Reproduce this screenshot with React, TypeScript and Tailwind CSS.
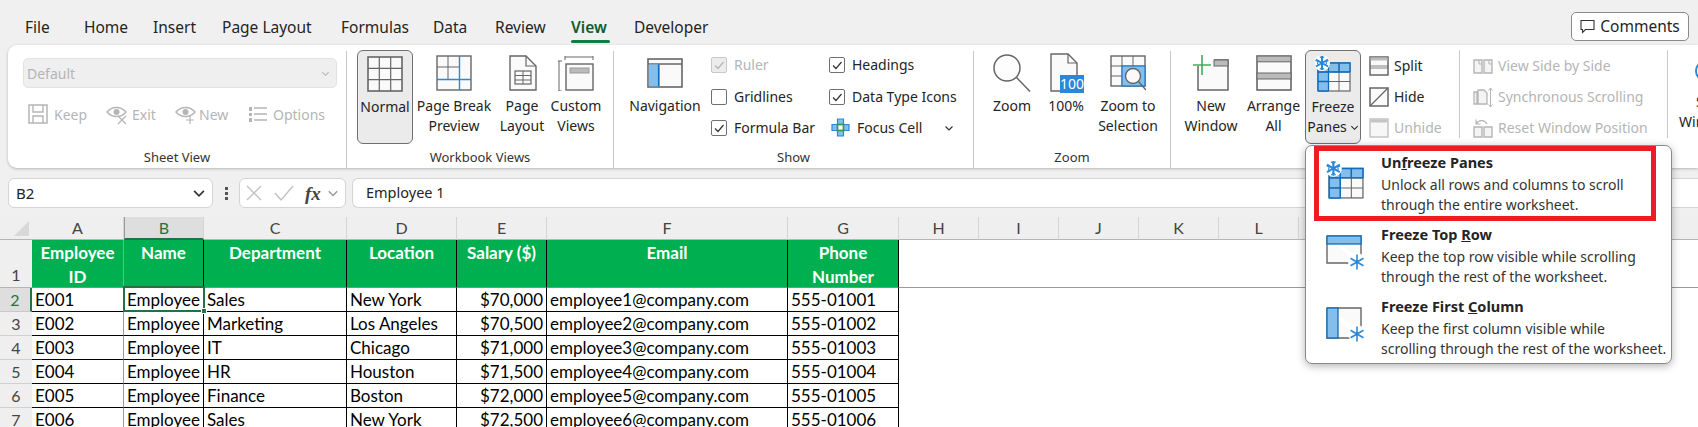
import React from "react";

const G = "#666666";
const B = "#2b88d8";
const L = "#83beec";
const D = "#c4c4c4";

function Svg({ s = 36, v = 36, children, className = "" }: { s?: number; v?: number; children: React.ReactNode; className?: string }) {
  return (
    <svg width={s} height={s} viewBox={`0 0 ${v} ${v}`} fill="none" className={"shrink-0 " + className}>
      {children}
    </svg>
  );
}

function Star({ x, y, r = 7, c = B, w = 1.6 }: { x: number; y: number; r?: number; c?: string; w?: number }) {
  const a = r * 0.87;
  const b = r * 0.5;
  return (
    <g stroke={c} strokeWidth={w}>
      <path d={`M${x} ${y - r}V${y + r}M${x - a} ${y - b}L${x + a} ${y + b}M${x - a} ${y + b}L${x + a} ${y - b}`} />
    </g>
  );
}

const NormalIcon = () => (
  <Svg>
    <rect x="1" y="1" width="34" height="34" fill="#fafafa" stroke={G} strokeWidth="1.6" />
    <path d="M12.3 1V35M23.7 1V35M1 12.3H35M1 23.7H35" stroke={G} strokeWidth="1.2" />
  </Svg>
);
const BreakIcon = () => (
  <Svg>
    <rect x="1" y="1" width="34" height="34" fill="#fafafa" stroke={G} strokeWidth="1.4" />
    <path d="M12 1V24M1 12H23" stroke={G} strokeWidth="1" />
    <path d="M23.5 1V35M1 24.5H35" stroke={B} strokeWidth="1.4" />
  </Svg>
);
const LayoutIcon = () => (
  <Svg>
    <path d="M6 1H22L32 11V35H6Z" fill="#fafafa" stroke={G} strokeWidth="1.4" />
    <path d="M22 1V11H32" stroke={G} strokeWidth="1.2" />
    <rect x="11" y="16" width="16" height="13" stroke={G} strokeWidth="1.2" />
    <path d="M11 20.5H27M11 25H27M19 16V29" stroke={G} />
  </Svg>
);
const CustomIcon = () => (
  <Svg>
    <path d="M1 5V35M0 5H4M0 35H4M7 1H35M7 0V4M35 0V4" stroke={G} strokeWidth="1" transform="translate(0 1)" />
    <rect x="8" y="9" width="27" height="26" fill="#fafafa" stroke={G} strokeWidth="1.4" />
    <rect x="12" y="13" width="19" height="5" fill="#bbbbbb" stroke="#999999" />
  </Svg>
);
const NavIcon = () => (
  <Svg>
    <rect x="1" y="4" width="34" height="28" fill="#fafafa" stroke={G} strokeWidth="1.6" />
    <path d="M1 9H35" stroke={G} strokeWidth="1.4" />
    <rect x="1.8" y="9.5" width="9" height="21.7" fill={L} />
    <rect x="10.8" y="9.5" width="1.8" height="21.7" fill="#0f6cbd" />
  </Svg>
);
const ZoomIcon = () => (
  <Svg s={40} v={40}>
    <circle cx="15" cy="15" r="13" fill="#fdfdfd" stroke={G} strokeWidth="1.5" />
    <path d="M24.5 24.5L38 38.5" stroke={G} strokeWidth="1.5" />
  </Svg>
);
const PctIcon = () => (
  <Svg s={40} v={40}>
    <path d="M5 1H22L31 10V38H5Z" fill="#fafafa" stroke={G} strokeWidth="1.4" />
    <path d="M22 1V10H31" stroke={G} strokeWidth="1.2" />
    <rect x="14" y="22" width="24" height="18" fill={B} />
    <text x="26" y="36" textAnchor="middle" fontSize="14" fill="#ffffff" fontFamily="Noto Sans, sans-serif">100</text>
  </Svg>
);
const ZoomSelIcon = () => (
  <Svg>
    <rect x="1" y="1" width="34" height="30" fill="#fafafa" stroke={G} strokeWidth="1.4" />
    <path d="M12 1V31M23 1V31M1 11H35M1 21H35" stroke={G} />
    <rect x="12" y="11" width="23" height="20" fill={L} stroke="#0f6cbd" />
    <circle cx="23" cy="21" r="7.5" fill="#fafafa" stroke={G} strokeWidth="1.4" />
    <path d="M28.5 26.5L36 35" stroke={G} strokeWidth="1.4" />
  </Svg>
);
const NewWinIcon = () => (
  <Svg>
    <path d="M5 11V35H35V5H21" stroke={G} strokeWidth="1.5" fill="#fafafa" />
    <rect x="21" y="5" width="14" height="6" fill="#bbbbbb" stroke={G} />
    <path d="M9 0V20M0 10H18" stroke="#3fae5a" strokeWidth="1.6" />
  </Svg>
);
const ArrangeIcon = () => (
  <Svg>
    <rect x="1" y="1" width="34" height="34" fill="#fafafa" stroke={G} strokeWidth="1.6" />
    <rect x="1.8" y="1.8" width="32.4" height="5" fill="#bbbbbb" />
    <rect x="1" y="18" width="34" height="6" fill="#bbbbbb" stroke={G} />
    <path d="M1 6.8H35" stroke={G} />
  </Svg>
);
function FreezeIcon({ s = 36 }: { s?: number }) {
  return (
    <Svg s={s} v={36}>
      <rect x="3" y="7" width="32" height="28" fill="#fafafa" stroke={G} strokeWidth="1.2" />
      <rect x="3" y="7" width="32" height="9" fill={L} />
      <rect x="3" y="7" width="10.5" height="28" fill={L} />
      <path d="M13.5 16V35M24 7V35M3 16H35M3 25.5H35" stroke={G} />
      <path d="M3 16H35M13.5 7V35M24 7V16M3 25.5H13.5" stroke="#0f6cbd" strokeWidth="1.3" />
      <path d="M3 35V7H35V16M3 35H13.5" stroke="#0f6cbd" strokeWidth="1.4" />
      <circle cx="7" cy="7" r="8" fill="#ffffff" />
      <Star x={7} y={7} r={7} w={2} />
      <path d="M4.8 0.6L7 2.6L9.2 0.6M4.8 13.4L7 11.4L9.2 13.4M0.6 4.8L3 5.6L2.4 8.4M13.4 4.8L11 5.6L11.6 8.4" stroke={B} strokeWidth="1.1" />
    </Svg>
  );
}
const TopRowIcon = () => (
  <Svg s={40} v={40}>
    <path d="M1 3H35V26M30 30H1V3" stroke={G} strokeWidth="1.4" fill="#fafafa" />
    <rect x="1" y="3" width="34" height="8" fill={L} stroke="#0f6cbd" strokeWidth="1.3" />
    <circle cx="31" cy="29" r="9" fill="#ffffff" />
    <Star x={31} y={29} r={7.4} />
  </Svg>
);
const FirstColIcon = () => (
  <Svg s={40} v={40}>
    <path d="M1 3H35V26M30 33H1V3" stroke={G} strokeWidth="1.4" fill="#fafafa" />
    <rect x="1" y="3" width="11" height="30" fill={L} stroke="#0f6cbd" strokeWidth="1.3" />
    <circle cx="31" cy="29" r="9" fill="#ffffff" />
    <Star x={31} y={29} r={7.4} />
  </Svg>
);

const SplitIcon = () => (
  <Svg s={20} v={20}>
    <rect x="1" y="1" width="18" height="18" stroke={G} strokeWidth="1.5" fill="#fafafa" />
    <rect x="1.5" y="1.5" width="17" height="3" fill="#bbbbbb" />
    <path d="M1 10H19M1 12H19" stroke={G} strokeWidth="0.8" />
  </Svg>
);
const HideIcon = () => (
  <Svg s={20} v={20}>
    <rect x="1" y="1" width="18" height="18" stroke={G} strokeWidth="1.5" fill="#fafafa" />
    <path d="M1 19L19 1" stroke={G} strokeWidth="1.2" />
  </Svg>
);
const UnhideIcon = () => (
  <Svg s={20} v={20}>
    <rect x="1" y="1" width="18" height="18" stroke={D} strokeWidth="1.5" fill="#f7f7f7" />
    <rect x="1.5" y="1.5" width="17" height="3" fill={D} />
  </Svg>
);
const SideIcon = () => (
  <Svg s={20} v={20}>
    <path d="M1 4H9V17H1ZM11 4H19V17H11Z" stroke="#b5b5b5" strokeWidth="1.4" fill="#f4f4f4" />
    <path d="M6 4V8H9M16 4V8H19" stroke="#b5b5b5" />
  </Svg>
);
const SyncIcon = () => (
  <Svg s={20} v={20} >
    <path d="M1 5H4V17H1ZM5 3H11L14 6V17H5Z" stroke="#b5b5b5" strokeWidth="1.3" fill="#f4f4f4" />
    <path d="M17.5 1V20M15.5 3.5L17.5 1L19.5 3.5M15.5 17.5L17.5 20L19.5 17.5" stroke="#b5b5b5" />
  </Svg>
);
const ResetIcon = () => (
  <Svg s={20} v={20}>
    <path d="M1 9H9V19H1ZM11 9H19V19H11Z" stroke="#b5b5b5" strokeWidth="1.4" fill="#f4f4f4" />
    <path d="M3 6C6 1 12 2 14 6M3 1.5V6H7.5" stroke="#b5b5b5" strokeWidth="1.2" />
  </Svg>
);
const FocusIcon = () => (
  <Svg s={19} v={19}>
    <path d="M6.5 1H12.5V6.5H18V12.5H12.5V18H6.5V12.5H1V6.5H6.5Z" fill={L} stroke={B} strokeWidth="1.2" />
    <rect x="6.5" y="6.5" width="6" height="6" fill="#ffffff" stroke="#3a9a5b" strokeWidth="1.8" />
  </Svg>
);
const SaveIcon = () => (
  <Svg s={20} v={20}>
    <path d="M1 1H19V19H1Z" stroke="#b5b5b5" strokeWidth="1.5" />
    <path d="M5 1V8H15V1M5 19V12H15V19" stroke="#b5b5b5" strokeWidth="1.4" />
  </Svg>
);
function EyeIcon({ plus }: { plus?: boolean }) {
  return (
    <Svg s={22} v={22}>
      <path d="M1 9C6 3 15 3 20 9C15 15 6 15 1 9Z" stroke="#b5b5b5" strokeWidth="1.4" />
      <circle cx="10.5" cy="9" r="3" fill="#b5b5b5" />
      {plus ? (
        <path d="M15 13V21M11 17H19" stroke="#b5b5b5" strokeWidth="1.2" />
      ) : (
        <path d="M12 13L20 21M20 13L12 21" stroke="#b5b5b5" strokeWidth="1.2" />
      )}
    </Svg>
  );
}
const ListIcon = () => (
  <Svg s={20} v={20}>
    <path d="M1 3H4V7H1ZM1 9H4V12H1ZM1 14H4V18H1Z" fill="#b5b5b5" />
    <path d="M6 4H19M6 10H19M6 16H19" stroke="#b5b5b5" strokeWidth="1.5" />
  </Svg>
);
const Chevron = ({ c = "#444444", s = 10 }: { c?: string; s?: number }) => (
  <svg width={s} height={s} viewBox="0 0 10 10" fill="none" className="shrink-0">
    <path d="M1.5 3.5L5 7L8.5 3.5" stroke={c} strokeWidth="1.2" />
  </svg>
);

function Big({ w, icon, lines, active, chev }: { w: string; icon: React.ReactNode; lines: string[]; active?: boolean; chev?: boolean }) {
  return (
    <div className={w + " h-[94px] shrink-0 flex flex-col items-center rounded-[6px] pt-[4px] " + (active ? "bg-[#ebebeb] border border-[#707070] pt-[3px]" : "")}>
      <div className="h-[38px] flex items-center justify-center">{icon}</div>
      <div className="mt-[4px] text-center leading-[20px] whitespace-nowrap text-[#242424]">
        {lines.map((l, i) => (
          <div key={l} className="flex items-center justify-center gap-[3px]">
            {l}
            {chev && i === lines.length - 1 ? <Chevron c="#242424" s={9} /> : null}
          </div>
        ))}
      </div>
    </div>
  );
}

function Check({ label, on, off, w }: { label: string; on?: boolean; off?: boolean; w: string }) {
  return (
    <div className={w + " h-[31px] first:h-[29px] first:mb-[2px] flex items-center gap-[7px] " + (off ? "text-[#b5b5b5]" : "text-[#242424]")}>
      <span className={"w-[16px] h-[16px] rounded-[2px] border flex items-center justify-center shrink-0 " + (off ? "border-[#c8c8c8] bg-[#ececec]" : "border-[#707070]")}>
        {on ? (
          <svg width="12" height="12" viewBox="0 0 12 12" fill="none">
            <path d="M2 6.5L5 9.5L10.5 3" stroke={off ? "#b5b5b5" : "#333333"} strokeWidth="1.2" />
          </svg>
        ) : null}
      </span>
      {label}
    </div>
  );
}

function Small({ icon, label, off, gap = "gap-[5px]" }: { icon: React.ReactNode; label: string; off?: boolean; gap?: string }) {
  return (
    <div className={"h-[31px] flex items-center whitespace-nowrap " + gap + " " + (off ? "text-[#b5b5b5]" : "text-[#242424]")}>
      {icon}
      {label}
    </div>
  );
}

function Group({ w, label, children, last }: { w: string; label?: string; children: React.ReactNode; last?: boolean }) {
  return (
    <div className={w + " shrink-0 mt-[6px] flex flex-col " + (last ? "" : "border-r border-[#c8c8c8]")}>
      <div className="h-[94px] -mt-[1px] flex">{children}</div>
      <div className="mt-[3px] h-[20px] leading-[20px] text-center text-[13px] text-[#333333]">{label}</div>
    </div>
  );
}

const TABS: [string, string][] = [
  ["File", "w-[59px]"],
  ["Home", "w-[69px]"],
  ["Insert", "w-[69px]"],
  ["Page Layout", "w-[119px]"],
  ["Formulas", "w-[92px]"],
  ["Data", "w-[62px]"],
  ["Review", "w-[76px]"],
  ["View", "w-[63px]"],
  ["Developer", "w-[90px]"],
];

const ROWS = [
  ["E001", "Sales", "New York", "$70,000", "employee1@company.com", "555-01001"],
  ["E002", "Marketing", "Los Angeles", "$70,500", "employee2@company.com", "555-01002"],
  ["E003", "IT", "Chicago", "$71,000", "employee3@company.com", "555-01003"],
  ["E004", "HR", "Houston", "$71,500", "employee4@company.com", "555-01004"],
  ["E005", "Finance", "Boston", "$72,000", "employee5@company.com", "555-01005"],
  ["E006", "Sales", "New York", "$72,500", "employee6@company.com", "555-01006"],
];

const COLS = ["A", "B", "C", "D", "E", "F", "G", "H", "I", "J", "K", "L", "M", "N", "O", "P", "Q"];
const HEAD = [["Employee", "ID"], ["Name"], ["Department"], ["Location"], ["Salary ($)"], ["Email"], ["Phone", "Number"]];

function MenuItem({ icon, title, desc }: { icon: React.ReactNode; title: React.ReactNode; desc: string[] }) {
  return (
    <div className="h-[72px] flex pt-[4px] pb-[4px]">
      <div className="w-[75px] shrink-0 pl-[20px] pt-[10px]">{icon}</div>
      <div>
        <div className="font-bold leading-[22px] mb-[2px] text-[14.5px] text-[#242424]">{title}</div>
        {desc.map((d) => (
          <div key={d} className="leading-[20px] text-[14px] text-[#333333] whitespace-nowrap">{d}</div>
        ))}
      </div>
    </div>
  );
}

export default function App() {
  const ui = "font-['Noto_Sans',sans-serif]";
  return (
    <div className={"relative w-[1698px] h-[427px] overflow-hidden bg-[#f0f0f0] text-[14px] " + ui}>
      {/* Tabs */}
      <div className="h-[45px] flex pl-[25px] text-[15.5px] text-[#242424]">
        {TABS.map(([t, w]) => (
          <div key={t} className={w + " shrink-0 pt-[15px] leading-[24px] " + (t === "View" ? "font-semibold text-[#0e5c2f]" : "")}>
            {t}
            {t === "View" ? <div className="mt-[1px] w-[39px] h-[3px] rounded-full bg-[#107c41]" /> : null}
          </div>
        ))}
        <div className="ml-auto mr-[9px] mt-[12px] h-[29px] w-[118px] border border-[#8a8a8a] rounded-[5px] bg-white flex items-center justify-center gap-[5px] text-[15.5px]">
          <svg width="15" height="15" viewBox="0 0 15 15" fill="none">
            <path d="M1 1.5H14V10.5H5.5L2.5 13.5V10.5H1Z" stroke="#333333" strokeWidth="1.1" />
          </svg>
          Comments
        </div>
      </div>

      {/* Ribbon */}
      <div className="ml-[8px] h-[123px] flex bg-white rounded-l-[9px] shadow-[0_1px_3px_rgba(0,0,0,0.25)] overflow-hidden">
        <Group w="w-[339px]" label="Sheet View">
          <div className="pl-[15px] pt-[8px]">
            <div className="w-[314px] h-[30px] rounded-[5px] bg-[#efefef] border border-[#e2e2e2] flex items-center justify-between px-[3px] pr-[6px] text-[#b5b5b5]">
              Default
              <Chevron c="#b5b5b5" s={9} />
            </div>
            <div className="flex mt-[10px] text-[#b5b5b5] items-center h-[32px]">
              <div className="ml-[5px] w-[78px]"><Small icon={<SaveIcon />} label="Keep" off gap="gap-[6px]" /></div>
              <div className="w-[69px]"><Small icon={<EyeIcon />} label="Exit" off gap="gap-[4px]" /></div>
              <div className="w-[73px]"><Small icon={<EyeIcon plus />} label="New" off gap="gap-[2px]" /></div>
              <Small icon={<ListIcon />} label="Options" off gap="gap-[5px]" />
            </div>
          </div>
        </Group>
        <Group w="w-[267px]" label="Workbook Views">
          <div className="w-[10px] shrink-0" />
          <Big w="w-[56px]" icon={<NormalIcon />} lines={["Normal"]} active />
          <Big w="w-[82px]" icon={<BreakIcon />} lines={["Page Break", "Preview"]} />
          <Big w="w-[54px]" icon={<LayoutIcon />} lines={["Page", "Layout"]} />
          <Big w="w-[54px]" icon={<CustomIcon />} lines={["Custom", "Views"]} />
        </Group>
        <Group w="w-[360px]" label="Show">
          <div className="w-[11px] shrink-0" />
          <Big w="w-[80px]" icon={<NavIcon />} lines={["Navigation"]} />
          <div className="w-[6px] shrink-0" />
          <div className="w-[118px] shrink-0">
            <Check label="Ruler" on off w="w-full" />
            <Check label="Gridlines" w="w-full" />
            <Check label="Formula Bar" on w="w-full" />
          </div>
          <div className="shrink-0">
            <Check label="Headings" on w="w-full" />
            <Check label="Data Type Icons" on w="w-full" />
            <div className="h-[31px] flex items-center text-[#242424] pl-[2px] gap-[7px]">
              <FocusIcon />
              Focus Cell
              <span className="ml-[15px]"><Chevron c="#333333" s={10} /></span>
            </div>
          </div>
        </Group>
        <Group w="w-[197px]" label="Zoom">
          <div className="w-[12px] shrink-0" />
          <Big w="w-[52px]" icon={<ZoomIcon />} lines={["Zoom"]} />
          <Big w="w-[56px]" icon={<PctIcon />} lines={["100%"]} />
          <Big w="w-[68px]" icon={<ZoomSelIcon />} lines={["Zoom to", "Selection"]} />
        </Group>
        <Group w="w-[540px]" last>
          <div className="w-[9px] shrink-0" />
          <Big w="w-[62px]" icon={<NewWinIcon />} lines={["New", "Window"]} />
          <Big w="w-[63px]" icon={<ArrangeIcon />} lines={["Arrange", "All"]} />
          <Big w="w-[56px]" icon={<FreezeIcon />} lines={["Freeze", "Panes"]} active chev />
          <div className="w-[8px] shrink-0" />
          <div className="w-[91px] shrink-0 border-r border-[#c8c8c8] h-[88px]">
            <Small icon={<SplitIcon />} label="Split" />
            <Small icon={<HideIcon />} label="Hide" />
            <Small icon={<UnhideIcon />} label="Unhide" off />
          </div>
          <div className="w-[208px] shrink-0 border-r border-[#c8c8c8] pl-[13px] h-[88px]">
            <Small icon={<SideIcon />} label="View Side by Side" off />
            <Small icon={<SyncIcon />} label="Synchronous Scrolling" off />
            <Small icon={<ResetIcon />} label="Reset Window Position" off />
          </div>
          <div className="pl-[11px] shrink-0">
            <div className="h-[42px] flex items-center pl-[16px]">
              <span className="w-[36px] h-[22px] border-2 border-[#2b88d8] rounded-full" />
            </div>
            <div className="leading-[20px] pl-[17px] text-[#242424]">Switch</div>
            <div className="leading-[20px] text-[#242424]">Windows</div>
          </div>
        </Group>
      </div>

      {/* Formula bar */}
      <div className="mt-[10px] h-[30px] flex items-stretch pl-[8px] text-[15px] text-[#242424]">
        <div className="w-[205px] bg-white border border-[#d4d4d4] rounded-[6px] flex items-center justify-between pl-[7px] pr-[6px]">
          B2
          <Chevron c="#333333" s={14} />
        </div>
        <div className="w-[26px] flex flex-col items-center justify-center gap-[2px]">
          <span className="w-[3px] h-[3px] bg-[#555555]" />
          <span className="w-[3px] h-[3px] bg-[#555555]" />
          <span className="w-[3px] h-[3px] bg-[#555555]" />
        </div>
        <div className="w-[107px] bg-white border border-[#d4d4d4] rounded-[6px] flex items-center pl-[6px]">
          <svg width="16" height="16" viewBox="0 0 16 16" fill="none" className="mr-[12px]">
            <path d="M1 1L15 15M15 1L1 15" stroke="#c0c0c0" strokeWidth="1.3" />
          </svg>
          <svg width="20" height="16" viewBox="0 0 20 16" fill="none" className="mr-[11px]">
            <path d="M1 8L7 15L19 1" stroke="#c0c0c0" strokeWidth="1.3" />
          </svg>
          <span className="font-['Liberation_Serif',serif] italic font-bold text-[19px] leading-none text-[#444444] mr-[6px]">fx</span>
          <Chevron c="#999999" s={12} />
        </div>
        <div className="ml-[6px] flex-1 bg-white border-t border-b border-l border-[#d4d4d4] rounded-l-[6px] flex items-center pl-[13px] text-[14.5px]">
          Employee 1
        </div>
      </div>

      {/* Sheet */}
      <div className="mt-[9px] grid grid-cols-[32px_92px_80px_143px_110px_90px_241px_111px_repeat(10,80px)] grid-rows-[23px_48px_repeat(6,24px)] font-['Lato',sans-serif] text-[17px] text-black bg-white">
        <div className="bg-[#efefef] border-b border-[#b5b5b5] relative">
          <div className="absolute right-[3px] bottom-[3px] w-0 h-0 border-l-[15px] border-l-transparent border-b-[15px] border-b-[#d8d8d8]" />
        </div>
        {COLS.map((c) => (
          <div key={c} className={"flex items-center justify-center border-r border-[#d4d4d4] text-[16px] " + (c === "B" ? "bg-[#dedede] border-b-[2px] border-b-[#217346] text-[#217346] border-l border-l-[#9a9a9a]" : "bg-[#efefef] border-b border-b-[#b5b5b5] text-[#444444]")}>
            {c}
          </div>
        ))}

        <div className="bg-[#efefef] border-b border-[#b5b5b5] flex items-end justify-center text-[16px] text-[#444444] leading-[24px]">1</div>
        {HEAD.map((h, i) => (
          <div key={i} className={"bg-[#00b050] text-white font-bold text-center leading-[24px] pt-[1px] border-b border-[#8a8a8a] border-r " + (i === 0 ? "border-r-[#9a9a9a]" : "border-r-black")}>
            {h.map((l) => <div key={l}>{l}</div>)}
          </div>
        ))}
        {COLS.slice(7).map((c) => (
          <div key={c} className="border-b border-[#9a9a9a]" />
        ))}

        {ROWS.map((r, i) => (
          <React.Fragment key={r[0]}>
            <div className={"flex items-center justify-center text-[16px] border-b " + (i === 0 ? "bg-[#dedede] border-r-[2px] border-r-[#217346] text-[#217346] border-b-[#c8c8c8]" : "bg-[#efefef] text-[#444444] border-b-[#d0d0d0]")}>
              {i + 2}
            </div>
            <div className="px-[3px] leading-[24px] border-b border-black border-r border-r-[#9a9a9a] whitespace-nowrap">{r[0]}</div>
            <div className="relative px-[3px] leading-[24px] whitespace-nowrap overflow-hidden border-b border-r border-black">Employee {i + 1}</div>
            <div className="px-[3px] leading-[24px] border-b border-r border-black whitespace-nowrap">{r[1]}</div>
            <div className="px-[3px] leading-[24px] border-b border-r border-black whitespace-nowrap">{r[2]}</div>
            <div className="px-[3px] leading-[24px] border-b border-r border-black text-right whitespace-nowrap">{r[3]}</div>
            <div className="px-[3px] leading-[24px] border-b border-r border-black whitespace-nowrap">{r[4]}</div>
            <div className="px-[3px] leading-[24px] border-b border-r border-black whitespace-nowrap">{r[5]}</div>
            {COLS.slice(7).map((c) => <div key={c} />)}
          </React.Fragment>
        ))}
      </div>

      {/* Selection box overlay */}
      <div className="absolute left-[123px] top-[286px] w-[82px] h-[26px] border-2 border-[#217346] pointer-events-none">
        <span className="absolute -right-[4px] -bottom-[4px] w-[6px] h-[6px] bg-[#217346] border border-white" />
      </div>

      {/* Dropdown */}
      <div className="absolute left-[1305px] top-[145px] w-[367px] h-[219px] bg-white border border-[#8a8a8a] rounded-[7px] shadow-[0_2px_8px_rgba(0,0,0,0.3)] pt-[1px]">
        <MenuItem
          icon={<FreezeIcon s={38} />}
          title={<>Un<span className="underline">f</span>reeze Panes</>}
          desc={["Unlock all rows and columns to scroll", "through the entire worksheet."]}
        />
        <MenuItem
          icon={<TopRowIcon />}
          title={<>Freeze Top <span className="underline">R</span>ow</>}
          desc={["Keep the top row visible while scrolling", "through the rest of the worksheet."]}
        />
        <MenuItem
          icon={<FirstColIcon />}
          title={<>Freeze First <span className="underline">C</span>olumn</>}
          desc={["Keep the first column visible while", "scrolling through the rest of the worksheet."]}
        />
        <div className="absolute left-[8px] top-[0px] w-[342px] h-[75px] border-[5px] border-[#ed1c24]" />
      </div>
    </div>
  );
}
